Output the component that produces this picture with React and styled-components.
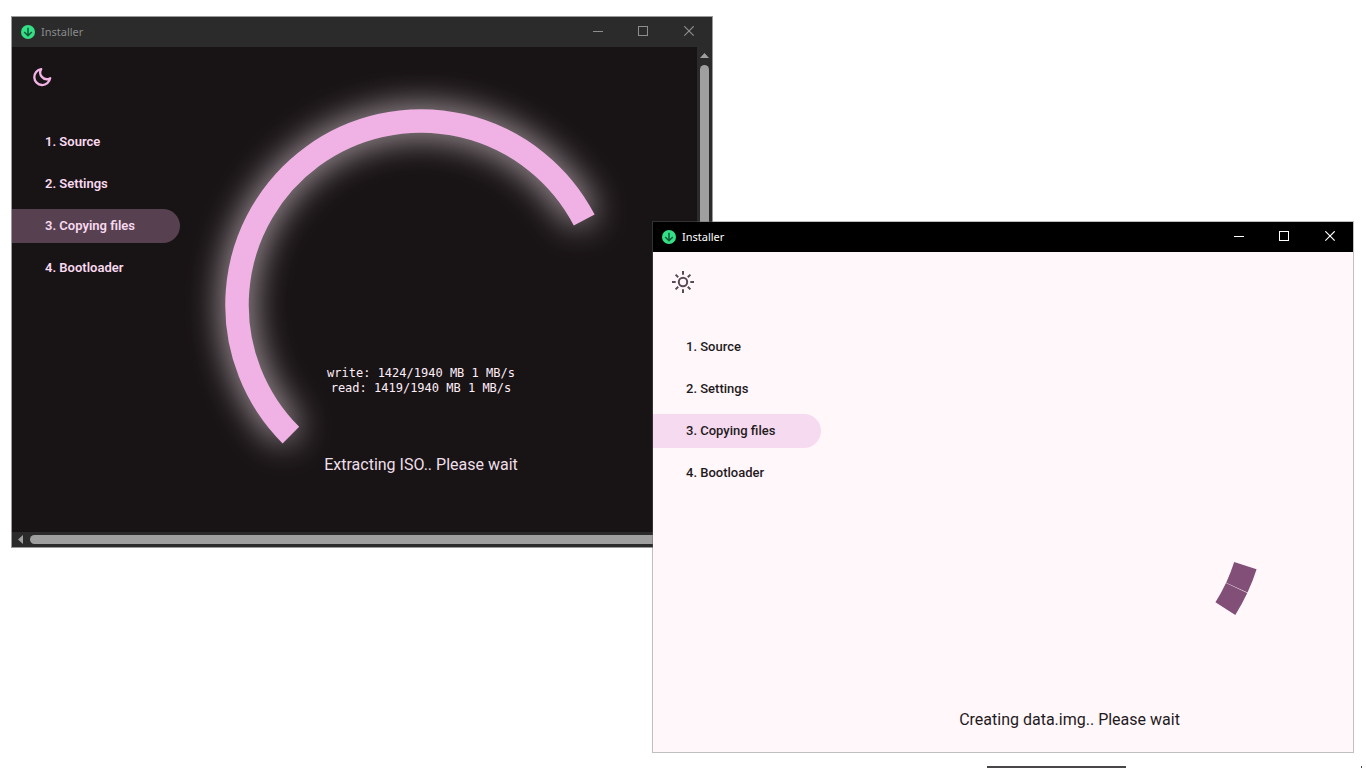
import React from 'react';
import styled, { createGlobalStyle, ThemeProvider } from 'styled-components';

const GlobalStyle = createGlobalStyle`
  * { box-sizing: border-box; }
  body { margin: 0; background: #ffffff; font-family: Roboto, "Liberation Sans", sans-serif; }
  button { font: inherit; }
`;

const darkTheme = {
  frame: '#9a9a9a',
  bar: '#2b2b2b',
  barText: '#8a8a8a',
  control: '#8e8e8e',
  surface: '#181315',
  text: '#f8d9ef',
  navWeight: 600,
  caption: '#eedfe8',
  pill: '#574151',
  icon: '#f2b3e6',
  arc: '#f0b2e4',
  glow: 'drop-shadow(0 0 18px #dccdd4)',
};

const lightTheme = {
  frame: 'rgba(96, 96, 96, 0.4)',
  bar: '#000000',
  barText: '#ffffff',
  control: '#ffffff',
  surface: '#fff7fa',
  text: '#1f1a1d',
  navWeight: 500,
  caption: '#1f1a1d',
  pill: '#f6daef',
  icon: '#584a54',
  arc: '#824f79',
  glow: 'none',
};

const Desktop = styled.main`
  position: relative;
  min-height: 100vh;
  overflow: hidden;
`;

const Frame = styled.section`
  position: absolute;
  left: ${({ $x }) => $x}px;
  top: ${({ $y }) => $y}px;
  width: 702px;
  height: 532px;
  display: flex;
  flex-direction: column;
  border: 1px solid ${({ theme }) => theme.frame};
  background: ${({ theme }) => theme.surface};
  background-clip: padding-box;
`;

const TitleBar = styled.header`
  flex: none;
  display: flex;
  align-items: center;
  height: 30px;
  padding-left: 9px;
  gap: 6px;
  background: ${({ theme }) => theme.bar};
  color: ${({ theme }) => theme.barText};
`;

const Title = styled.h1`
  flex: 1;
  margin: 0;
  font: 400 11px/16px "Noto Sans", "Open Sans", sans-serif;
`;

const Controls = styled.div`
  display: flex;
  align-self: stretch;
`;

const ControlButton = styled.button`
  display: grid;
  place-items: center;
  width: 46px;
  padding: 0 0 2px;
  border: 0;
  background: none;
  color: ${({ theme }) => theme.control};
`;

const Body = styled.div`
  flex: 1;
  min-height: 0;
  display: grid;
  grid-template-columns: 1fr auto;
  grid-template-rows: 1fr auto;
`;

const Content = styled.div`
  display: flex;
  min-width: 0;
  padding-right: 35px;
`;

const Sidebar = styled.aside`
  flex: none;
  width: 168px;
`;

const ThemeButton = styled.button`
  display: block;
  margin: 18px 0 36px 18px;
  padding: 0;
  width: 24px;
  height: 24px;
  border: 0;
  background: none;
  color: ${({ theme }) => theme.icon};
  svg { display: block; }
`;

const Steps = styled.nav`
  display: flex;
  flex-direction: column;
  gap: 8px;
`;

const Step = styled.a`
  height: 34px;
  padding-left: 33px;
  border-radius: 0 17px 17px 0;
  background: ${({ theme, $active }) => ($active ? theme.pill : 'transparent')};
  color: ${({ theme }) => theme.text};
  font-size: 13px;
  font-weight: ${({ theme }) => theme.navWeight};
  line-height: 34px;
  text-decoration: none;
`;

const Stage = styled.div`
  flex: 1;
  display: grid;
  justify-items: center;
  > * { grid-area: 1 / 1; }
`;

const Gauge = styled.svg`
  margin-top: 62px;
  overflow: visible;
  filter: ${({ theme }) => theme.glow};
`;

const Status = styled.div`
  align-self: end;
  display: flex;
  flex-direction: column;
  align-items: center;
  gap: 59px;
  padding-bottom: ${({ $bottom }) => $bottom}px;
`;

const Log = styled.pre`
  margin: 0;
  color: #ffeef8;
  font: 400 12px/15px "DejaVu Sans Mono", "Liberation Mono", monospace;
  text-align: center;
`;

const Caption = styled.p`
  margin: 0;
  color: ${({ theme }) => theme.caption};
  font-size: 16px;
  line-height: 20px;
`;

const Track = styled.div`
  display: flex;
  flex-direction: ${({ $vertical }) => ($vertical ? 'column' : 'row')};
  align-items: center;
  gap: 7px;
  ${({ $vertical }) => ($vertical ? 'width: 15px; padding: 6px 0 20px; grid-row: 1 / 3; grid-column: 2;' : 'height: 15px; padding: 0 0 0 6px;')}
  background: #2b2b2b;
  svg { flex: none; display: block; }
`;

const Thumb = styled.div`
  flex: 1;
  ${({ $vertical }) => ($vertical ? 'width: 9px;' : 'height: 9px;')}
  border-radius: 5px;
  background: #9f9f9f;
`;

const TaskbarEdge = styled.footer`
  position: fixed;
  right: 4px;
  bottom: 0;
  display: flex;
  gap: 235px;
`;

const EdgeMark = styled.span`
  width: ${({ $width }) => $width}px;
  height: 2px;
  background: #484648;
`;

function Logo() {
  return (
    <svg width="14" height="14" viewBox="0 0 14 14" aria-hidden="true">
      <circle cx="7" cy="7" r="7" fill="#35df86" />
      <path d="M7 2.8v8M3.2 7 7 10.8 10.8 7" fill="none" stroke="#0c5b38" strokeWidth="1.5" />
    </svg>
  );
}

function MoonIcon() {
  return (
    <svg width="24" height="24" viewBox="0 0 24 24" fill="none" stroke="currentColor" strokeWidth="2.3" strokeLinejoin="round" aria-hidden="true">
      <path d="M11.2 4.1A8 8 0 1 0 20.2 13.2A6.6 6.6 0 0 1 11.2 4.1Z" />
    </svg>
  );
}

function SunIcon() {
  return (
    <svg width="24" height="24" viewBox="0 0 24 24" fill="none" stroke="currentColor" strokeWidth="2" aria-hidden="true">
      <circle cx="12" cy="12" r="4.2" />
      <path d="M12 1v3.7M12 19.3V23M1 12h3.7M19.3 12H23M4.6 4.6l2.6 2.6M16.8 16.8l2.6 2.6M19.4 4.6l-2.6 2.6M7.2 16.8l-2.6 2.6" />
    </svg>
  );
}

function WindowControls() {
  const line = { width: 11, height: 11, viewBox: '0 0 11 11', fill: 'none', stroke: 'currentColor', 'aria-hidden': true };
  return (
    <Controls>
      <ControlButton type="button" aria-label="Minimize">
        <svg {...line}><path d="M1 5.5h10" /></svg>
      </ControlButton>
      <ControlButton type="button" aria-label="Maximize">
        <svg {...line}><rect x="0.5" y="0.5" width="9" height="9" /></svg>
      </ControlButton>
      <ControlButton type="button" aria-label="Close">
        <svg {...line}><path d="M.3.3l9.4 9.4M9.7.3.3 9.7" strokeWidth="1.2" /></svg>
      </ControlButton>
    </Controls>
  );
}

const steps = ['1. Source', '2. Settings', '3. Copying files', '4. Bootloader'];

// A point on the gauge circle; angles are in degrees, clockwise from three o'clock.
const point = (angle, radius) => {
  const a = (angle * Math.PI) / 180;
  return `${(196 + radius * Math.cos(a)).toFixed(2)} ${(196 + radius * Math.sin(a)).toFixed(2)}`;
};

function Arc({ from, to }) {
  const large = to - from > 180 ? 1 : 0;
  return <path d={`M${point(from, 184)}A184 184 0 ${large} 1 ${point(to, 184)}`} />;
}

function InstallerWindow({ theme, x, y, icon, arcs, log, caption, statusBottom, scrollable }) {
  return (
    <ThemeProvider theme={theme}>
      <Frame $x={x} $y={y}>
        <TitleBar>
          <Logo />
          <Title>Installer</Title>
          <WindowControls />
        </TitleBar>
        <Body>
          <Content>
            <Sidebar>
              <ThemeButton type="button" aria-label="Switch theme">{icon}</ThemeButton>
              <Steps>
                {steps.map((step, i) => (
                  <Step key={step} href="#" $active={i === 2}>{step}</Step>
                ))}
              </Steps>
            </Sidebar>
            <Stage>
              <Gauge width="392" height="392" viewBox="0 0 392 392" fill="none" stroke={theme.arc} strokeWidth="23.5" aria-hidden="true">
                {arcs.map(([from, to]) => <Arc key={from} from={from} to={to} />)}
              </Gauge>
              <Status $bottom={statusBottom}>
                {log && <Log>{log}</Log>}
                <Caption>{caption}</Caption>
              </Status>
            </Stage>
          </Content>
          {scrollable && (
            <>
              <Track $vertical>
                <svg width="9" height="5" viewBox="0 0 9 5" aria-hidden="true"><path d="M0 5 4.5 0 9 5z" fill="#9f9f9f" /></svg>
                <Thumb $vertical />
              </Track>
              <Track>
                <svg width="5" height="9" viewBox="0 0 5 9" aria-hidden="true"><path d="M5 0 0 4.5 5 9z" fill="#9f9f9f" /></svg>
                <Thumb />
              </Track>
            </>
          )}
        </Body>
      </Frame>
    </ThemeProvider>
  );
}

export default function App() {
  return (
    <Desktop>
      <GlobalStyle />
      <InstallerWindow
        theme={darkTheme}
        x={11}
        y={16}
        icon={<MoonIcon />}
        arcs={[[135, 332.5]]}
        log={'write: 1424/1940 MB 1 MB/s\nread: 1419/1940 MB 1 MB/s'}
        caption="Extracting ISO.. Please wait"
        statusBottom={57}
        scrollable
      />
      <InstallerWindow
        theme={lightTheme}
        x={652}
        y={221}
        icon={<SunIcon />}
        arcs={[[17.6, 24.95], [25.1, 32.4]]}
        caption="Creating data.img.. Please wait"
        statusBottom={22}
      />
      <TaskbarEdge>
        <EdgeMark $width={139} />
        <EdgeMark $width={1} />
      </TaskbarEdge>
    </Desktop>
  );
}
